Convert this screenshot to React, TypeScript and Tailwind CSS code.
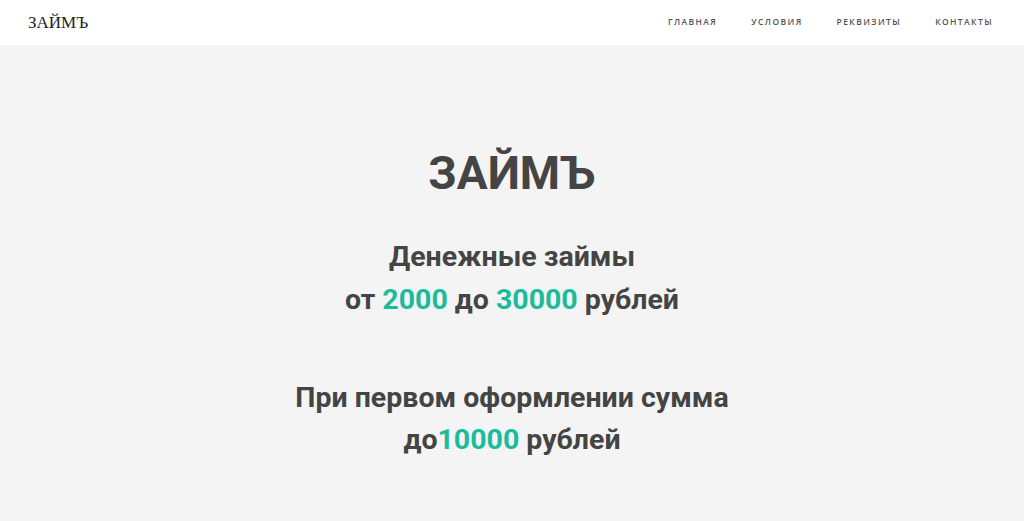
const navItems = ["Главная", "Условия", "Реквизиты", "Контакты"];

const Accent = ({ children }: { children: React.ReactNode }) => (
  <span className="text-[#1abc9c]">{children}</span>
);

export default function App() {
  return (
    <div className="min-h-[521px] bg-[#f4f4f4] font-['Roboto',sans-serif] text-[#444]">
      <header className="flex h-[45px] items-center justify-between bg-white pl-7 pr-[31px]">
        <div className="font-['Liberation_Serif',serif] text-[17px] text-[#222]">ЗАЙМЪ</div>
        <nav className="flex gap-[34px] pt-[-1px]">
          {navItems.map((item) => (
            <a
              key={item}
              href="#"
              className="font-['Open_Sans',sans-serif] text-[8.5px] font-semibold uppercase tracking-[1.4px] text-[#555]"
            >
              {item}
            </a>
          ))}
        </nav>
      </header>

      <main className="flex flex-col items-center pt-[100px] text-center">
        <h1 className="text-[46px] font-bold leading-[56px]">ЗАЙМЪ</h1>
        <p className="mt-[34px] text-[28.5px] font-bold leading-[43px]">
          Денежные займы
          <br />
          от <Accent>2000</Accent> до <Accent>30000</Accent> рублей
        </p>
        <p className="mt-[56px] text-[28.5px] font-bold leading-[42px]">
          При первом оформлении сумма
          <br />
          до<Accent>10000</Accent> рублей
        </p>
      </main>
    </div>
  );
}
